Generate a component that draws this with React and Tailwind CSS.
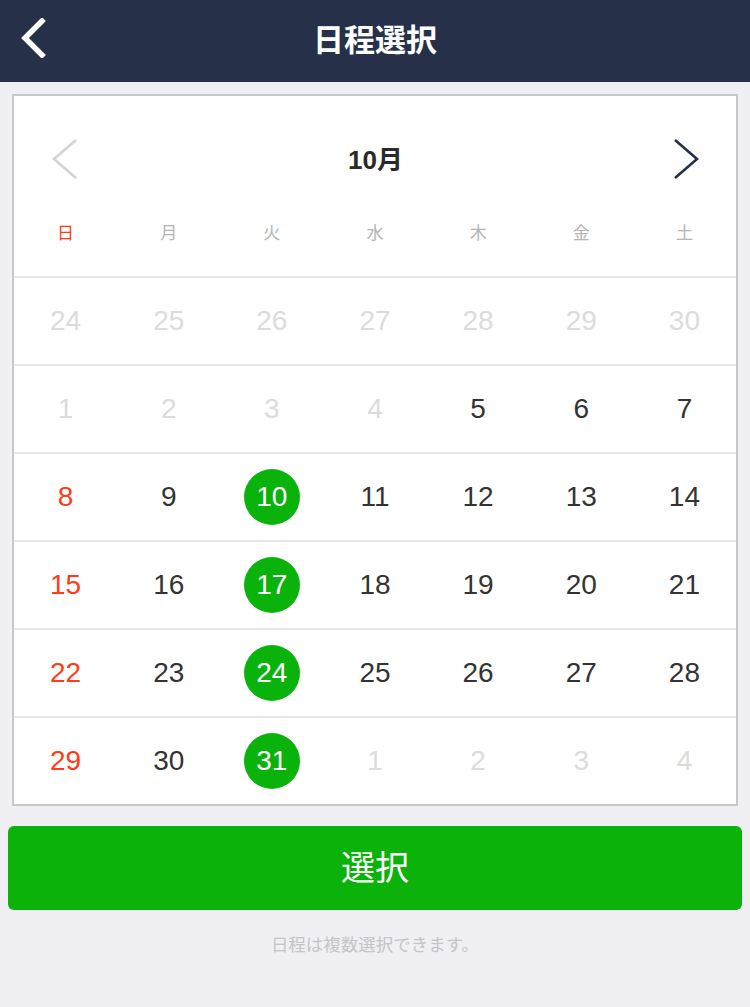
import React from "react";

const FONT = { fontFamily: '"Liberation Sans", "Noto Sans CJK JP", sans-serif' };

const weeks = [
  [[24, "o"], [25, "o"], [26, "o"], [27, "o"], [28, "o"], [29, "o"], [30, "o"]],
  [[1, "o"], [2, "o"], [3, "o"], [4, "o"], [5, "n"], [6, "n"], [7, "n"]],
  [[8, "s"], [9, "n"], [10, "g"], [11, "n"], [12, "n"], [13, "n"], [14, "n"]],
  [[15, "s"], [16, "n"], [17, "g"], [18, "n"], [19, "n"], [20, "n"], [21, "n"]],
  [[22, "s"], [23, "n"], [24, "g"], [25, "n"], [26, "n"], [27, "n"], [28, "n"]],
  [[29, "s"], [30, "n"], [31, "g"], [1, "o"], [2, "o"], [3, "o"], [4, "o"]],
];

const days = ["日", "月", "火", "水", "木", "金", "土"];

function Cell({ n, t }) {
  if (t === "g") {
    return (
      <div className="flex items-center justify-center">
        <div className="w-[56px] h-[56px] rounded-full bg-[#0ab20c] flex items-center justify-center text-white text-[28px] leading-none">
          {n}
        </div>
      </div>
    );
  }
  const color =
    t === "o" ? "text-[#dcdcdc]" : t === "s" ? "text-[#ff3b1a]" : "text-[#333333]";
  return (
    <div className={`flex items-center justify-center text-[28px] leading-none ${color}`}>{n}</div>
  );
}

export default function App() {
  return (
    <div className="w-[750px] h-[1007px] bg-[#efeff4] flex flex-col" style={FONT}>
      <div className="h-[82px] bg-[#263049] relative flex items-center justify-center">
        <svg className="absolute left-[18px] top-[18px]" width="30" height="40" viewBox="0 0 30 40">
          <path d="M24 3 L7 20 L24 37" fill="none" stroke="#ffffff" strokeWidth="5.5" strokeLinecap="square" strokeLinejoin="miter" />
        </svg>
        <div className="text-white text-[31px] font-bold tracking-[0px]">日程選択</div>
      </div>

      <div className="mx-[12px] mt-[12px] border-2 border-[#c8c8cc] bg-white">
        <div className="border-b-2 border-[#e6e6e6]">
          <div className="pt-[42px] pl-[38px] pr-[37px] h-[84px] flex items-center justify-between">
            <svg width="26" height="42" viewBox="0 0 26 42">
              <path d="M24 2 L2 21 L24 40" fill="none" stroke="#d4d4d8" strokeWidth="2.6" />
            </svg>
            <div className="text-[26px] leading-[30px] font-bold text-[#2a2a2a] translate-y-[1px]">10月</div>
            <svg width="26" height="42" viewBox="0 0 26 42">
              <path d="M2 2 L24 21 L2 40" fill="none" stroke="#263049" strokeWidth="2.6" />
            </svg>
          </div>
          <div className="grid grid-cols-7 pt-[44px] pb-[32px]">
            {days.map((d, i) => (
              <div
                key={d}
                className={`text-center text-[17px] leading-[20px] ${i === 0 ? "text-[#ff3b1a]" : "text-[#b4b4b4]"}`}
              >
                {d}
              </div>
            ))}
          </div>
        </div>
        {weeks.map((w, wi) => (
          <div
            key={wi}
            className={`grid grid-cols-7 ${wi < weeks.length - 1 ? "h-[88px] border-b-2 border-[#e6e6e6]" : "h-[86px]"}`}
          >
            {w.map(([n, t], ci) => (
              <Cell key={ci} n={n} t={t} />
            ))}
          </div>
        ))}
      </div>

      <button className="mx-[8px] mt-[20px] h-[84px] rounded-[6px] bg-[#0ab20a] text-white text-[34px] flex items-center justify-center">
        選択
      </button>
      <div className="mt-[25px] text-center text-[17.5px] leading-[20px] text-[#c4c4c8]">
        日程は複数選択できます。
      </div>
    </div>
  );
}
